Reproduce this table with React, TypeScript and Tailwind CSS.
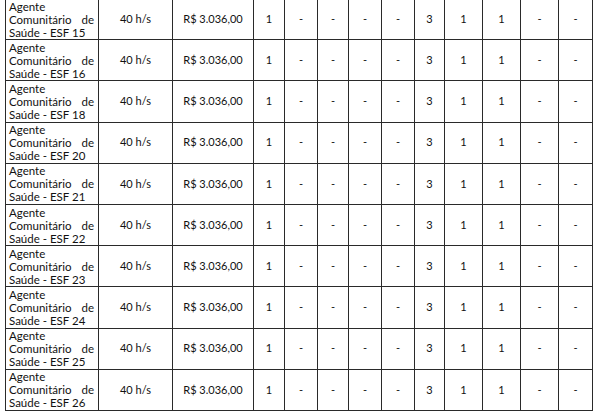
const widths = [93, 74, 81, 31, 33, 31, 33, 33, 30, 38, 38, 38, 34];

const esf = ["15", "16", "18", "20", "21", "22", "23", "24", "25", "26"];

const values = ["1", "-", "-", "-", "-", "3", "1", "1", "-", "-"];

const App = () => {
	return (
		<div className="w-[600px] h-[417px] overflow-hidden bg-white pl-[5px] text-[#111] font-['Lato',sans-serif]">
			<table className="mt-[-2px] table-fixed border-collapse w-[588px]">
				<colgroup>
					{widths.map((w, i) => (
						<col key={i} style={{ width: w }} />
					))}
				</colgroup>
				<tbody>
					{esf.map((n) => (
						<tr key={n} className="h-[41.2px]">
							<td className="border border-[#2a2a2a] pl-[3px] pr-[4px] align-middle text-justify text-[11.5px] leading-[13px]">
								Agente Comunitário de Saúde - ESF {n}
							</td>
							<td className="border border-[#2a2a2a] text-center align-middle text-[11px]">40 h/s</td>
							<td className="border border-[#2a2a2a] text-center align-middle text-[11px]">R$ 3.036,00</td>
							{values.map((v, i) => (
								<td key={i} className="border border-[#2a2a2a] text-center align-middle text-[11px]">
									{v}
								</td>
							))}
						</tr>
					))}
				</tbody>
			</table>
		</div>
	);
};

export default App;
